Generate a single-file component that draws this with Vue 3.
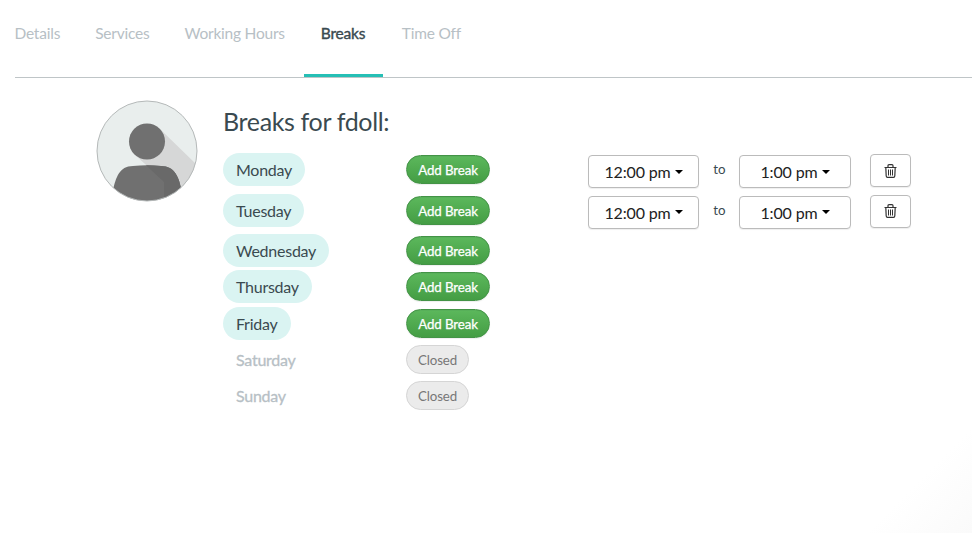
<script setup>
const tabs = ['Details', 'Services', 'Working Hours', 'Breaks', 'Time Off']
const slot = { from: '12:00 pm', to: '1:00 pm' }
const days = [
  { name: 'Monday', open: true, slot },
  { name: 'Tuesday', open: true, slot },
  { name: 'Wednesday', open: true },
  { name: 'Thursday', open: true },
  { name: 'Friday', open: true },
  { name: 'Saturday', open: false },
  { name: 'Sunday', open: false },
]
</script>

<template>
  <div class="page">
    <nav class="tabs">
      <a v-for="tab in tabs" :key="tab" class="tab" :class="{ active: tab === 'Breaks' }">{{ tab }}</a>
    </nav>
    <main class="content">
      <svg class="avatar" viewBox="0 0 102 102">
        <defs>
          <clipPath id="avatar-clip"><circle cx="51" cy="51" r="50" /></clipPath>
        </defs>
        <g clip-path="url(#avatar-clip)">
          <rect width="102" height="102" fill="#e9eeed" />
          <path d="M64 29 L102 66 V102 H78 V90 L39 55 Z" fill="#d6d7d7" />
          <path d="M17 102 V90 C20 78 23 66 37 66 C46 65 56 65 65 66 C79 66 83 78 85 88 V102 Z" fill="#707070" />
          <path d="M50 65.300 Q58 65.300 65 66 C79 66 83 78 85 88 V102 H68 V82 Z" fill="#696969" />
          <circle cx="51" cy="41.500" r="18" fill="#707070" />
        </g>
        <circle cx="51" cy="51" r="50" fill="none" stroke="#b5b9b9" />
      </svg>
      <section class="breaks">
        <h1>Breaks for fdoll:</h1>
        <div v-for="day in days" :key="day.name" class="row" :class="{ tall: day.slot }">
          <div class="day-cell">
            <span class="day" :class="{ off: !day.open }">{{ day.name }}</span>
          </div>
          <div class="action-cell">
            <button class="pill" :class="day.open ? 'add' : 'closed'">{{ day.open ? 'Add Break' : 'Closed' }}</button>
          </div>
          <template v-if="day.slot">
            <button class="time from">{{ day.slot.from }}<i class="caret"></i></button>
            <span class="to">to</span>
            <button class="time until">{{ day.slot.to }}<i class="caret"></i></button>
            <button class="trash" aria-label="Delete">
              <svg width="13" height="14" viewBox="0 0 13 14" fill="none" stroke="#333">
                <path d="M.5 3.500 H12.500 M4 3.300 V1.800 Q4 .7 5 .7 H8 Q9 .7 9 1.800 V3.300" stroke-width="1.200" />
                <path d="M1.800 3.500 L2.200 12 Q2.300 13.300 3.500 13.300 H9.500 Q10.700 13.300 10.800 12 L11.200 3.500" stroke-width="1.200" />
                <path d="M4.500 5.500 V11.500 M6.500 5.500 V11.500 M8.500 5.500 V11.500" />
              </svg>
            </button>
          </template>
        </div>
      </section>
    </main>
  </div>
</template>

<style>
body { background: #fff; }
</style>

<style scoped>
.page {
  box-sizing: border-box;
  height: 533px;
  padding-left: 15px;
  overflow: hidden;
  font-family: Lato, sans-serif;
  color: #3a4a50;
  background: linear-gradient(135deg, transparent 93%, #fafafa 100%), #fff;
}
.tabs {
  display: flex;
  box-sizing: border-box;
  height: 78px;
  border-bottom: 1px solid #bfc5c7;
}
.tab {
  box-sizing: border-box;
  height: 77px;
  padding: 23px 18px 0 17px;
  font-size: 15.500px;
  letter-spacing: -.22px;
  line-height: 20px;
  color: #b7c0c5;
  white-space: nowrap;
}
.tab:first-child { margin-left: -17.500px; }
.tab.active {
  width: 79px;
  margin-left: 1px;
  padding: 23px 0 0 17px;
  -webkit-text-stroke: .4px #3a4a50;
  color: #3a4a50;
  border-bottom: 3px solid #26bfb5;
}
.tab.active + .tab { padding-left: 19px; }
.content {
  display: flex;
  padding: 21px 0 0 81px;
}
.avatar { width: 102px; height: 102px; flex: none; margin-top: .5px; }
.breaks { margin-left: 25px; padding-top: 7px; }
h1 {
  height: 47px;
  margin: 0;
  font-size: 25px;
  letter-spacing: -.35px;
  line-height: 31px;
  font-weight: 400;
  color: #3a4a50;
}
button {
  box-sizing: border-box;
  margin: 0;
  font-family: inherit;
}
.row { display: flex; height: 36.300px; }
.row.tall { height: 40.500px; }
.day-cell { width: 183px; }
.day {
  display: inline-block;
  box-sizing: border-box;
  height: 33px;
  padding: 0 13px;
  border-radius: 17px;
  background: #daf4f2;
  font-size: 16px;
  letter-spacing: -.25px;
  line-height: 34px;
}
.day.off { background: transparent; color: #b7c0c5; -webkit-text-stroke: .3px #b7c0c5; }
.action-cell { width: 182px; padding-top: 2px; }
.pill {
  height: 29px;
  padding: 0 10px;
  border-radius: 15px;
  font-size: 13.300px;
  letter-spacing: -.1px;
  line-height: 28px;
  white-space: nowrap;
}
.add {
  width: 84px;
  color: #fff;
  -webkit-text-stroke: .25px #fff;
  border: 1px solid #439346;
  background: linear-gradient(#5cb85c, #449d44);
  box-shadow: inset 0 1px 0 #58b05a, 0 1px 1px #0001;
}
.closed {
  width: 63px;
  color: #777;
  border: 1px solid #d5d5d5;
  background: #ebebeb;
}
.time, .trash {
  display: flex;
  align-items: center;
  justify-content: center;
  height: 33px;
  padding: 0;
  color: #222;
  border: 1px solid #bbb;
  border-radius: 4px;
  background: #fff;
  box-shadow: 0 1px 1px #0001;
}
.time { width: 111px; margin-top: 2px; font-size: 16px; letter-spacing: -.15px; }
.until { width: 112px; }
.caret {
  margin-left: 4px;
  border: 4.500px solid transparent;
  border-top-color: #000;
  border-bottom: 0;
}
.to { width: 40px; padding: 7px 0 0 1px; box-sizing: border-box; font-size: 13.300px; line-height: 18px; text-align: center; }
.trash { width: 41px; margin: 1px 0 0 19px; }
</style>
